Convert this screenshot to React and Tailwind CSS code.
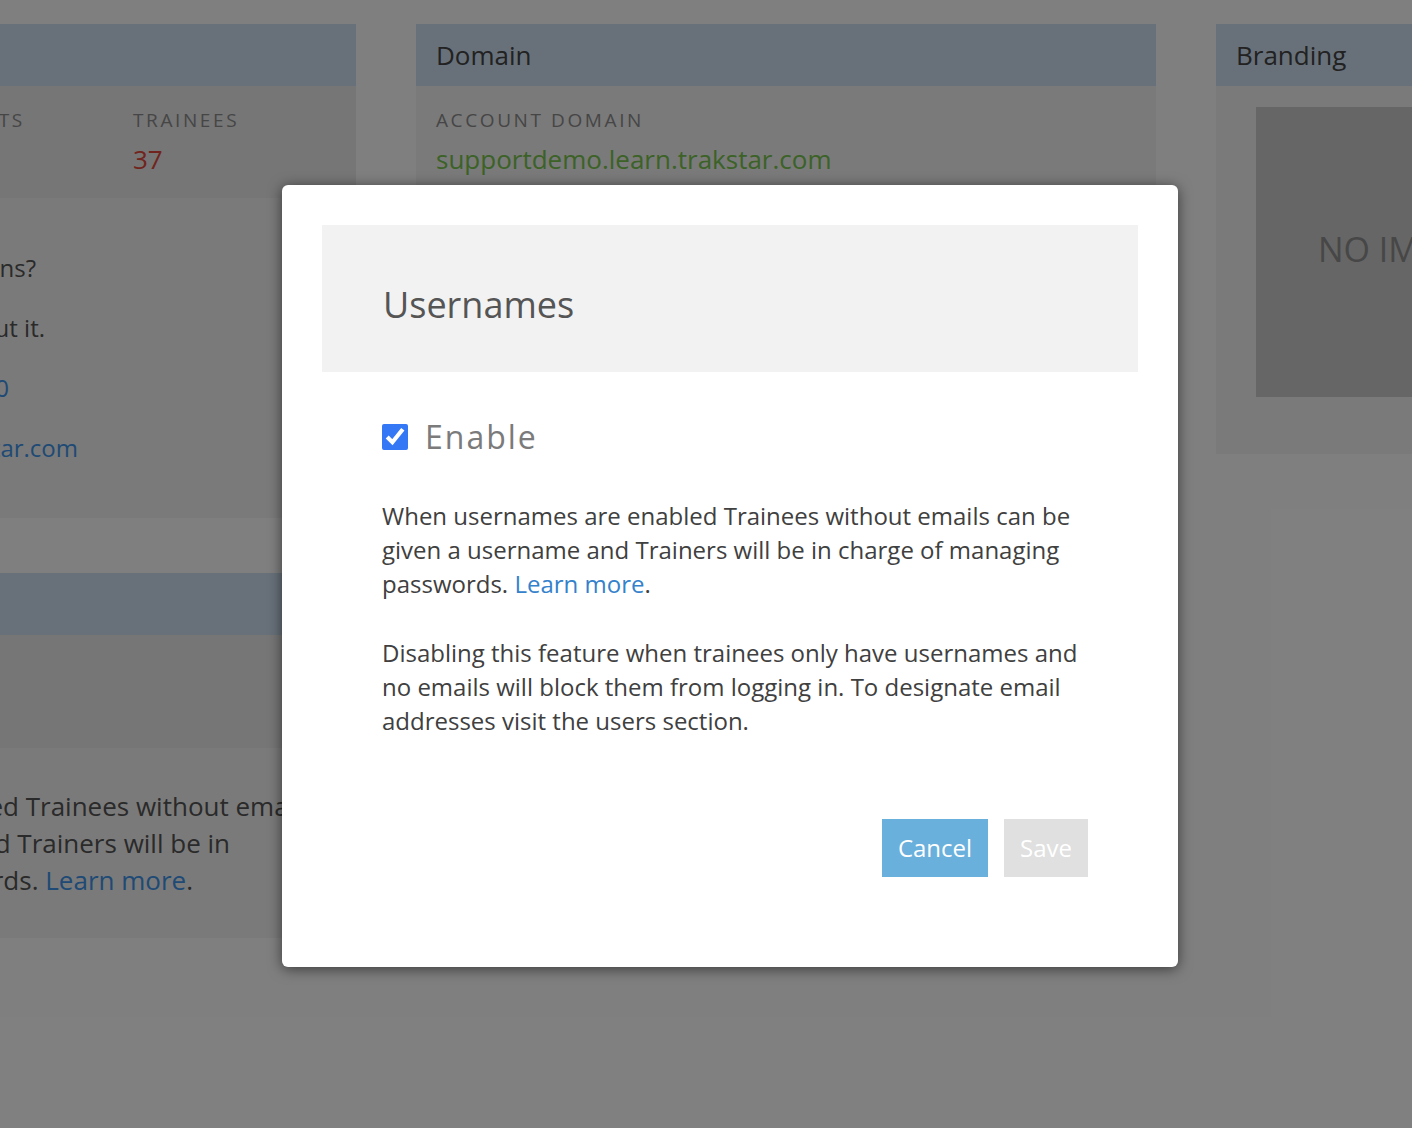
import { useState } from "react";

function PanelHeader({ title }) {
    return (
        <div className="h-[62px] bg-[#d0e2f4] px-[20px] flex items-center text-[26px] text-[#444]">
            {title}
        </div>
    );
}

function AccountColumn() {
    return (
        <div className="w-[740px] shrink-0 flex flex-col gap-[55px]">
            <div>
                <PanelHeader title="Account" />
                <div className="bg-[#ececec] h-[112px] px-[20px] pt-[21px] grid grid-cols-[147px_175px_175px_175px]">
                    {[
                        ["TRAINERS", "4"],
                        ["ADMINS", "2"],
                        ["SEATS", "50"],
                        ["TRAINEES", "37"],
                    ].map(([label, value]) => (
                        <div key={label}>
                            <div className="text-[19px] leading-[26px] tracking-[2.6px] text-[#8c8c8c]">{label}</div>
                            <div className="mt-[6px] text-[26px] leading-[40px] text-[#e2483a]">{value}</div>
                        </div>
                    ))}
                </div>
                <div className="bg-[#f4f4f4] h-[320px] px-[20px] py-[53px] flex flex-col gap-[26px] text-[24px] leading-[34px] whitespace-nowrap">
                    <p className="w-[400px] text-right text-[#555]">Have questions?</p>
                    <p className="w-[409px] text-right text-[#555]">We're happy to talk about it.</p>
                    <p className="w-[373px] text-right text-[#3e94ea]">1-800-555-1000</p>
                    <p className="w-[442px] text-right text-[#3e94ea]">support@trakstar.com</p>
                </div>
            </div>
            <div>
                <PanelHeader title="Usernames" />
                <div className="bg-[#ececec] h-[113px]" />
                <div className="bg-[#f4f4f4] h-[190px] px-[20px] pt-[40px] text-[26px] leading-[37px] text-[#555] whitespace-nowrap">
                    <p className="w-[765px] text-right">When usernames are enabled Trainees without emails can be</p>
                    <p className="w-[594px] text-right">given a username and Trainers will be in</p>
                    <p className="w-[557px] text-right">
                        charge of managing passwords. <span className="text-[#3e94ea]">Learn more</span>.
                    </p>
                </div>
            </div>
        </div>
    );
}

function DomainColumn() {
    return (
        <div className="w-[740px] shrink-0">
            <PanelHeader title="Domain" />
            <div className="bg-[#f4f4f4] h-[432px] px-[20px] pt-[21px]">
                <div className="text-[19px] leading-[26px] tracking-[2.6px] text-[#8c8c8c]">ACCOUNT DOMAIN</div>
                <div className="mt-[6px] text-[26px] leading-[40px] text-[#78c44e]">supportdemo.learn.trakstar.com</div>
            </div>
        </div>
    );
}

function BrandingColumn() {
    return (
        <div className="w-[740px] shrink-0">
            <PanelHeader title="Branding" />
            <div className="bg-[#f4f4f4] px-[40px] pt-[21px] pb-[57px]">
                <div className="w-[290px] h-[290px] bg-[#cccccc] flex items-center justify-center pb-[6px] text-[34px] text-[#8e8e8e]">
                    NO IMAGE
                </div>
            </div>
        </div>
    );
}

function UsernamesModal() {
    const [enabled, setEnabled] = useState(true);

    return (
        <div className="absolute left-[282px] top-[185px] w-[896px] h-[782px] bg-white rounded-[6px] p-[40px] shadow-[0_2px_14px_rgba(0,0,0,0.55)]">
            <div className="h-[147px] bg-[#f2f2f2] pl-[61px] pt-[12px] flex items-center text-[36px] text-[#555]">
                Usernames
            </div>
            <div className="px-[60px]">
                <label className="mt-[45px] flex items-center gap-[17px] h-[40px]">
                    <input
                        type="checkbox"
                        checked={enabled}
                        onChange={(e) => setEnabled(e.target.checked)}
                        className="w-[26px] h-[26px] m-0 accent-[#3478f6]"
                    />
                    <span className="text-[32px] tracking-[2px] text-[#7b7b7b]">Enable</span>
                </label>
                <div className="mt-[42px] w-[705px] text-[24px] leading-[34px] text-[#404040]">
                    <p>
                        When usernames are enabled Trainees without emails can be given a username and
                        Trainers will be in charge of managing passwords.{" "}
                        <span className="text-[#3481cc]">Learn more</span>.
                    </p>
                    <p className="mt-[35px]">
                        Disabling this feature when trainees only have usernames and no emails will block
                        them from logging in. To designate email addresses visit the users section.
                    </p>
                </div>
            </div>
            <div className="mt-[81px] pr-[50px] flex justify-end gap-[16px] text-[24px]">
                <button className="h-[58px] w-[106px] bg-[#6ab0dc] text-white">Cancel</button>
                <button className="h-[58px] w-[84px] bg-[#e0e0e0] text-white">Save</button>
            </div>
        </div>
    );
}

export default function App() {
    return (
        <div
            className="relative h-[1128px] overflow-hidden bg-white"
            style={{ fontFamily: '"Open Sans", sans-serif' }}
        >
            <div className="flex gap-[60px] pt-[24px] -ml-[384px]">
                <AccountColumn />
                <DomainColumn />
                <BrandingColumn />
            </div>
            <div className="absolute inset-0 bg-black/50" />
            <UsernamesModal />
        </div>
    );
}
